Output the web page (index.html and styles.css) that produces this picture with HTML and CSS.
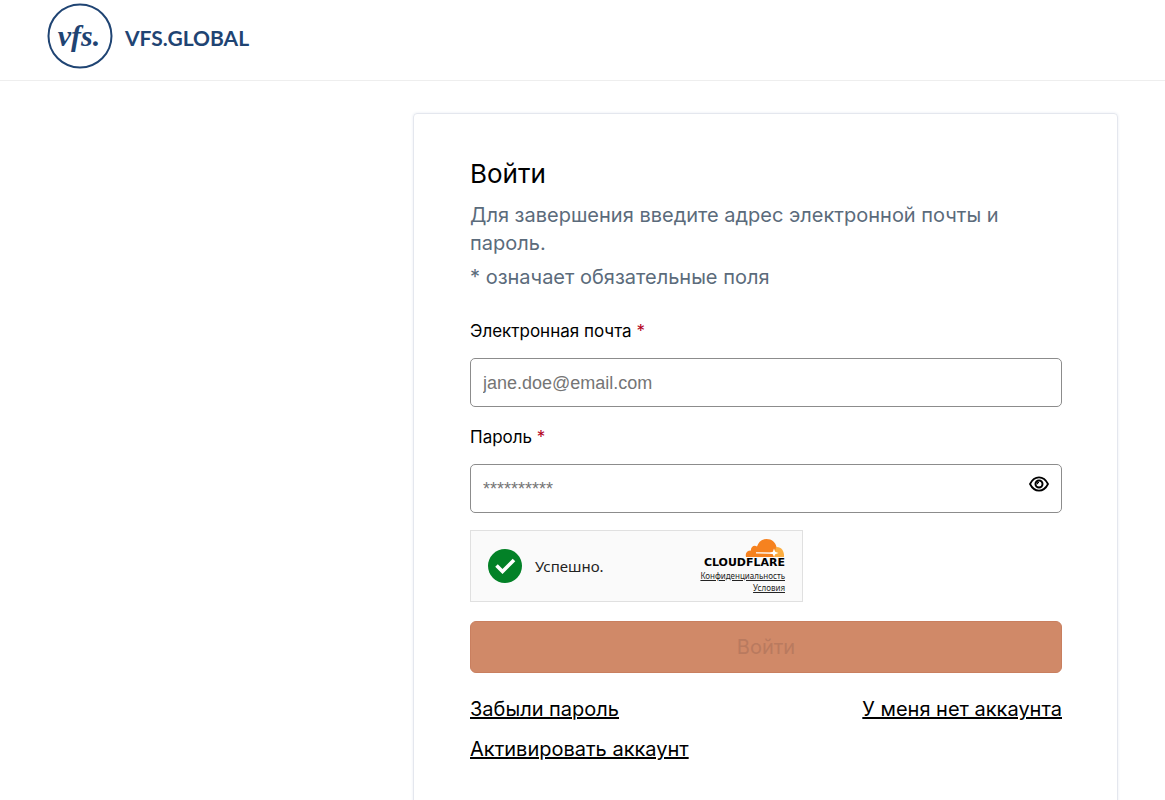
FILE: index.html
```html
<!DOCTYPE html>
<html lang="ru">
<head>
  <meta charset="UTF-8" />
  <meta name="viewport" content="width=device-width, initial-scale=1.0" />
  <title>VFS.GLOBAL</title>
  <link rel="stylesheet" href="styles.css">
</head>
<body>
  <header class="header">
    <a class="logo" href="#">
      <svg class="logo-mark" viewBox="0 0 66 66" aria-hidden="true">
        <circle cx="33" cy="33" r="31.5" fill="none" stroke="#1f4473" stroke-width="2" />
        <text x="32" y="43" text-anchor="middle" class="logo-script">vfs.</text>
      </svg>
      <span class="logo-name">VFS.GLOBAL</span>
    </a>
  </header>

  <main class="main">
    <form class="card">
      <h1 class="title">Войти</h1>
      <p class="note">Для завершения введите адрес электронной почты и пароль.</p>
      <p class="note">* означает обязательные поля</p>

      <div class="fields">
        <div class="field">
          <label for="email">Электронная почта <span class="required">*</span></label>
          <input id="email" type="email" placeholder="jane.doe@email.com">
        </div>
        <div class="field">
          <label for="password">Пароль <span class="required">*</span></label>
          <div class="password">
            <input id="password" type="password" placeholder="**********">
            <button class="eye" type="button" aria-label="Показать пароль">
              <svg viewBox="0 0 20 16" width="20" height="16" fill="none" stroke="#000">
                <path d="M1 8C3 4 6 1.400 10 1.400S17 4 19 8c-2 4-5 6.600-9 6.600S3 12 1 8z" stroke-width="1.800" stroke-linejoin="round" />
                <circle cx="10" cy="8" r="3.500" stroke-width="2" />
                <path d="M8.200 8.200a1.800 1.800 0 0 1 1.800-1.800" stroke-width="1.200" />
              </svg>
            </button>
          </div>
        </div>
      </div>

      <div class="captcha">
        <svg class="check" viewBox="0 0 34 34" aria-hidden="true">
          <circle cx="17" cy="17" r="17" fill="#038127" />
          <path d="M8.500 16.500l6 6L26 11" fill="none" stroke="#fff" stroke-width="3.600" />
        </svg>
        <span class="captcha-status">Успешно.</span>
        <div class="captcha-brand">
          <svg class="cloud" viewBox="0 0 40 18" width="40" height="18" aria-hidden="true">
            <path d="M1 18C0 14 2 11.500 6 11.500 5.500 8 9 5.500 12 7.500 13.500 3 17 0 21.500 0 27 0 30.500 3.500 31.500 8L30 18z" fill="#f6821f" />
            <path d="M29 18l2-10c5-.5 8.500 3.500 8 10z" fill="#fbad41" />
            <path d="M11 13.800h17M11 13.800l17 .7" stroke="#fff" stroke-width=".8" />
            <path d="M29 9.500l1.200 3.200 3.300 1.300-3.300 1.300L29 18l-1.200-2.700-3.300-1.300 3.300-1.300z" fill="#fff" />
          </svg>
          <span class="brand-name">CLOUDFLARE</span>
          <a href="#">Конфиденциальность</a>
          <a href="#">Условия</a>
        </div>
      </div>

      <button class="submit" type="submit" disabled>Войти</button>

      <div class="links">
        <a href="#">Забыли пароль</a>
        <a href="#">У меня нет аккаунта</a>
      </div>
      <div class="links">
        <a href="#">Активировать аккаунт</a>
      </div>
    </form>
  </main>
</body>
</html>
```
FILE: styles.css
```css
* { box-sizing: border-box; }
body {
  margin: 0;
  background: #fff;
  color: #000;
  font-family: Inter, sans-serif;
  font-size: 20px;
  line-height: 28px;
}
a { color: inherit; }
.header {
  display: flex;
  padding: 3px 47px 11px;
  border-bottom: 1px solid #eee;
}
.logo {
  display: flex;
  align-items: center;
  gap: 12px;
  color: #1f4473;
  text-decoration: none;
}
.logo-mark {
  width: 66px;
  height: 66px;
}
.logo-script {
  font: italic bold 30px "Liberation Serif", serif;
  fill: #1f4473;
}
.logo-name {
  padding-top: 3px;
  font-family: Lato, sans-serif;
  font-size: 21px;
  font-weight: bold;
}
.main {
  display: flex;
  justify-content: flex-end;
  padding: 32px 47px;
}
.card {
  width: 100%;
  max-width: 705px;
  padding: 42px 55px 56px 56px;
  border: 1px solid #e4e7ee;
  border-radius: 4px;
  box-shadow: 0 0 3px #e9ecf2;
}
.title {
  margin: 0 0 9px;
  font-size: 26px;
  font-weight: normal;
  line-height: 36px;
}
.note {
  margin: 0 0 6px;
  color: #5b6b7b;
}
.fields {
  display: flex;
  flex-direction: column;
  gap: 18px;
  margin: 28px 0 17px;
}
.field {
  display: flex;
  flex-direction: column;
  gap: 15px;
}
.field label {
  font-size: 17px;
  line-height: 24px;
}
.required { color: #b3001b; }
.field input {
  display: block;
  width: 100%;
  height: 49px;
  padding: 1px 12px 0;
  border: 1px solid #8c8c8c;
  border-radius: 5px;
  background: #fff;
  font-family: "Liberation Sans", Arial, sans-serif;
  font-size: 18px;
}
.field input::placeholder { color: #757575; }
.password { position: relative; }
.eye {
  position: absolute;
  top: 12px;
  right: 13px;
  display: flex;
  padding: 0;
  border: none;
  background: none;
}
.captcha {
  display: flex;
  align-items: center;
  max-width: 333px;
  height: 72px;
  padding: 0 17px;
  border: 1px solid #e0e0e0;
  background: #fafafa;
}
.check {
  width: 34px;
  height: 34px;
}
.captcha-status {
  margin-left: 13px;
  color: #232323;
  font-family: "Noto Sans", sans-serif;
  font-size: 15px;
}
.captcha-brand {
  display: flex;
  flex-direction: column;
  align-items: flex-end;
  margin-left: auto;
  color: #232323;
  font-family: "Noto Sans", sans-serif;
  font-size: 8px;
  line-height: 12px;
}
.brand-name {
  margin-bottom: 1px;
  color: #000;
  font-family: "DejaVu Sans", sans-serif;
  font-size: 11px;
  font-weight: bold;
}
.submit {
  display: block;
  width: 100%;
  height: 52px;
  margin: 19px 0 22px;
  border: 1px solid #c97f5f;
  border-radius: 6px;
  background: #d08968;
  color: #b97a5f;
  font-family: inherit;
  font-size: 20px;
}
.links {
  display: flex;
  justify-content: space-between;
  margin-bottom: 12px;
}
```
